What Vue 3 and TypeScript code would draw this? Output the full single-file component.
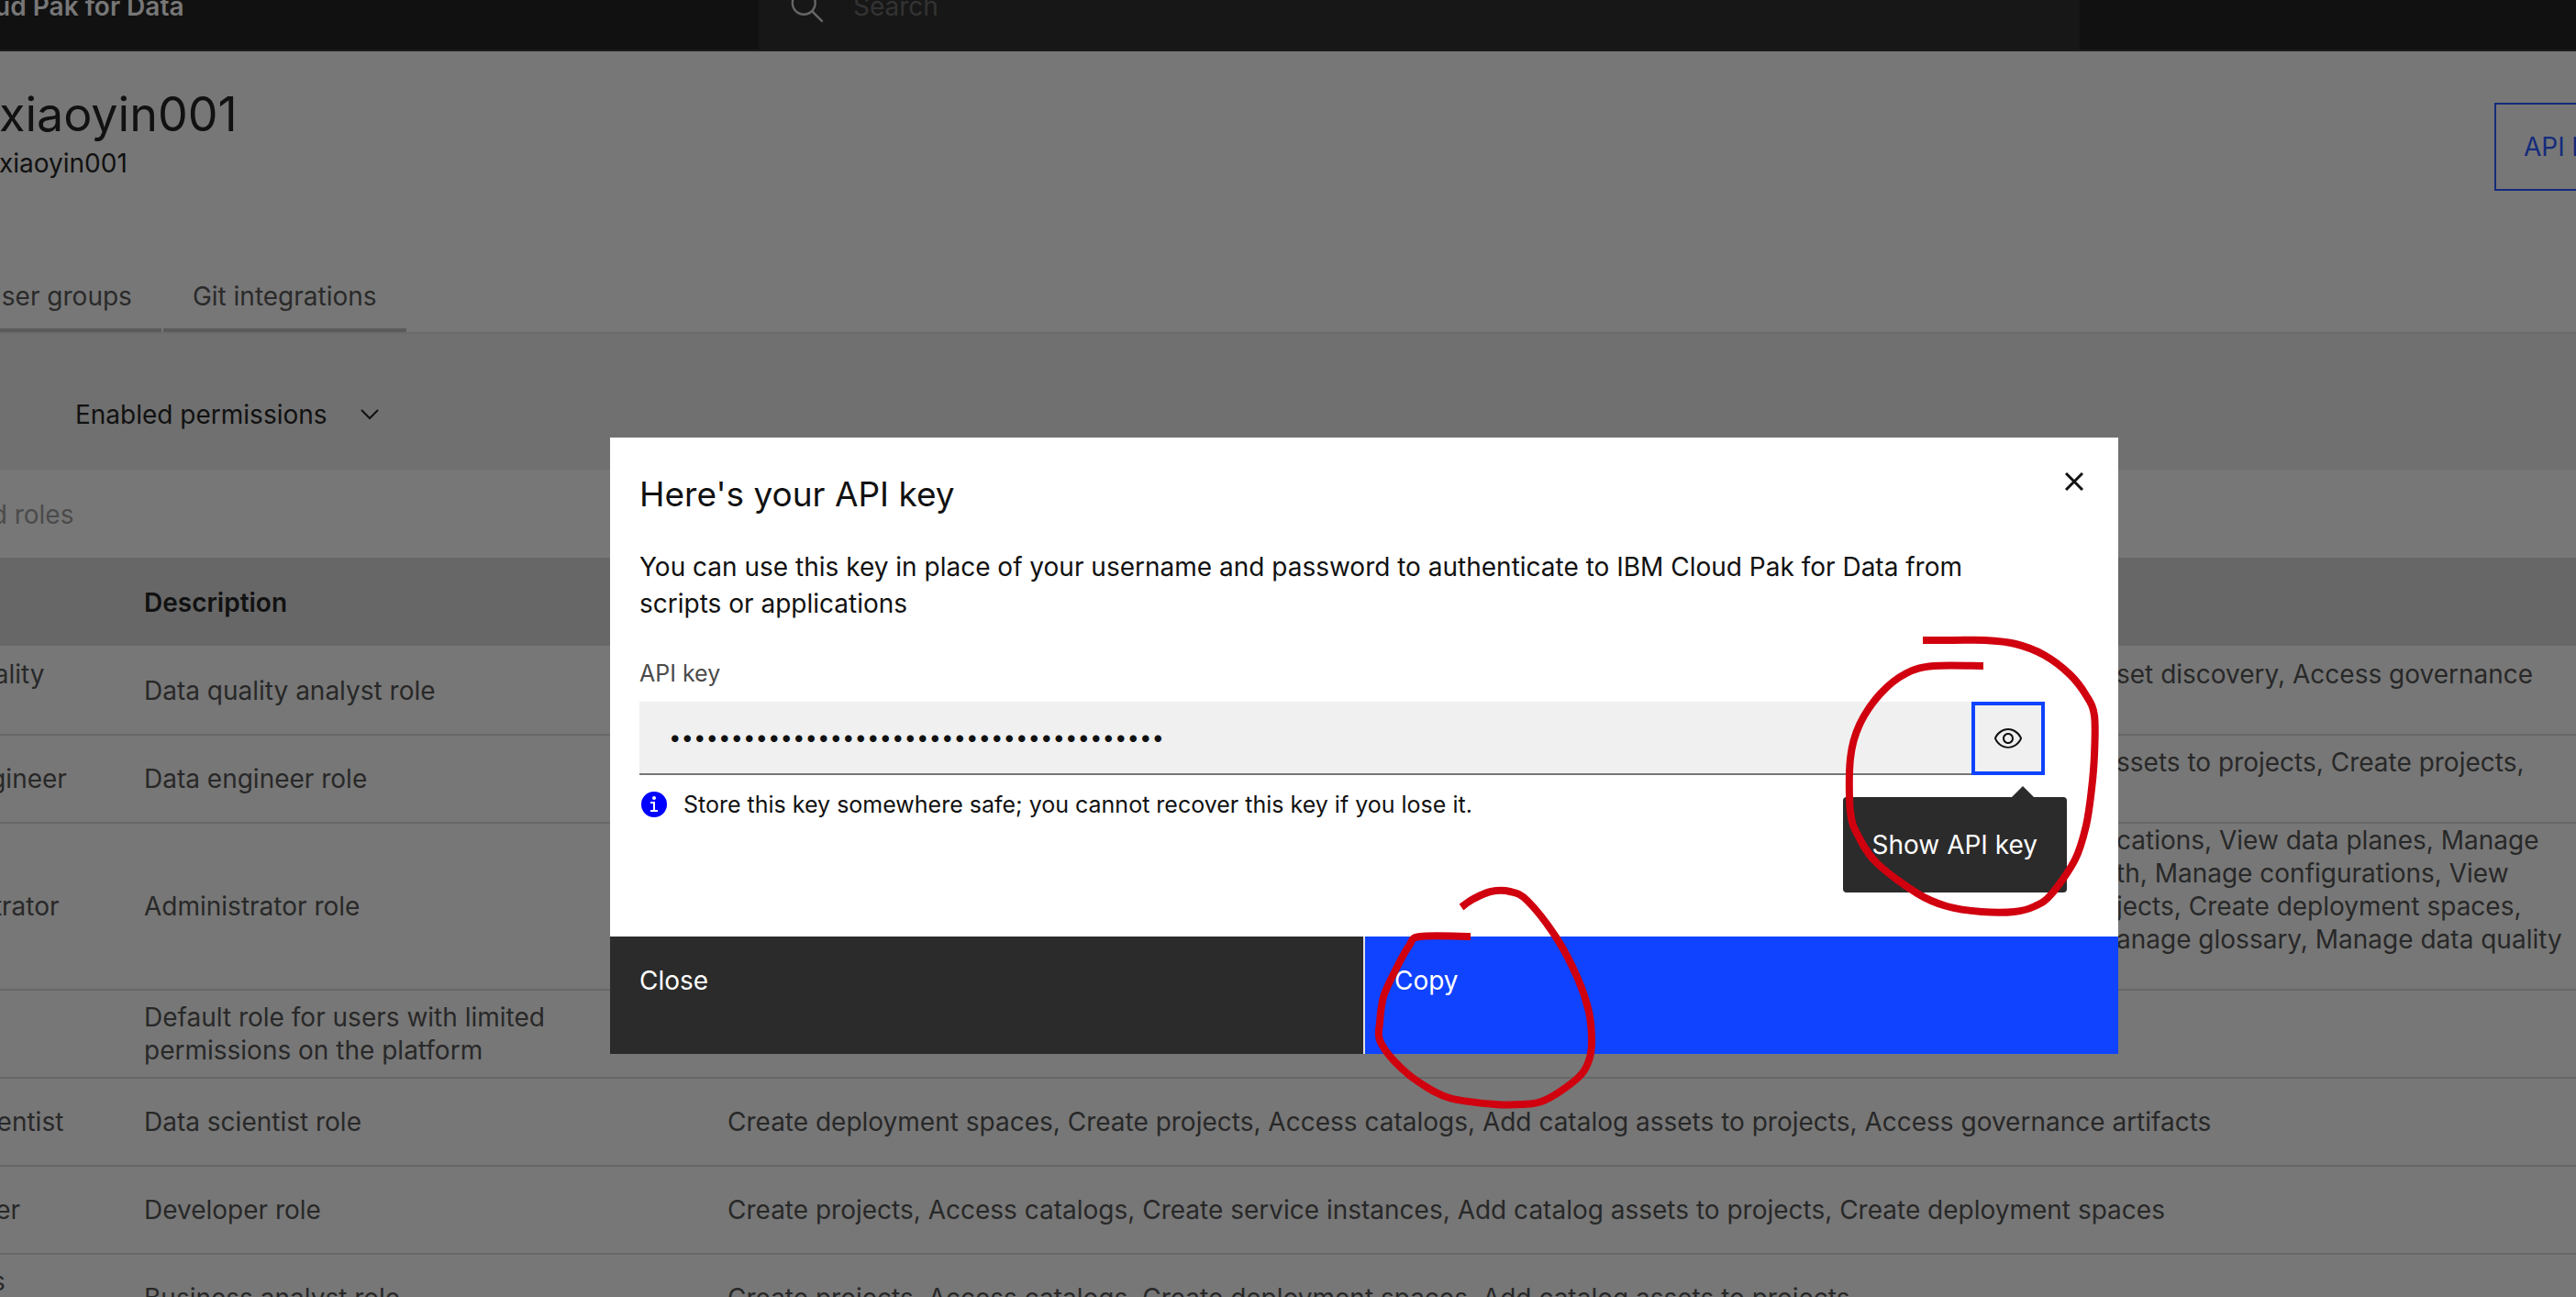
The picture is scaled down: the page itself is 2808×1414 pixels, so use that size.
<script setup lang="ts">
import { ref } from 'vue'

interface Role {
  name: string
  description: string
  permissions: string[]
  trailing?: boolean
}

type Point = [number, number]

const roles: Role[] = [
  {
    name: 'Data Quality Analyst',
    description: 'Data quality analyst role',
    permissions: ['set discovery, Access governance', ''],
    trailing: true,
  },
  {
    name: 'Data Engineer',
    description: 'Data engineer role',
    permissions: ['ssets to projects, Create projects,', ''],
    trailing: true,
  },
  {
    name: 'Administrator',
    description: 'Administrator role',
    permissions: [
      'cations, View data planes, Manage',
      'th, Manage configurations, View',
      'jects, Create deployment spaces,',
      'anage glossary, Manage data quality',
      '',
    ],
    trailing: true,
  },
  {
    name: 'User',
    description: 'Default role for users with limited permissions on the platform',
    permissions: [],
  },
  {
    name: 'Data Scientist',
    description: 'Data scientist role',
    permissions: [
      'Create deployment spaces, Create projects, Access catalogs, Add catalog assets to projects, Access governance artifacts',
    ],
  },
  {
    name: 'Developer',
    description: 'Developer role',
    permissions: [
      'Create projects, Access catalogs, Create service instances, Add catalog assets to projects, Create deployment spaces',
    ],
  },
  {
    name: 'Business Analyst',
    description: 'Business analyst role',
    permissions: ['Create projects, Access catalogs, Create deployment spaces, Add catalog assets to projects'],
  },
]

const apiKey = ref('x'.repeat(40))

const eyeMark: Point[] = [
  [2096, 698], [2130, 698], [2163, 698], [2197, 702], [2228, 714], [2256, 735], [2274, 758], [2283, 780],
  [2283, 823], [2280, 860], [2274, 900], [2262, 937], [2236, 975], [2218, 988], [2196, 994], [2160, 994],
  [2122, 988], [2090, 974], [2046, 941], [2026, 912], [2017, 885], [2017, 827], [2027, 790], [2050, 756],
  [2078, 734], [2108, 726], [2162, 726],
]

const copyMark: Point[] = [
  [1593, 989], [1606, 980], [1625, 972], [1646, 972], [1665, 982], [1697, 1023], [1720, 1067], [1732, 1103],
  [1735, 1132], [1733, 1153], [1724, 1171], [1702, 1189], [1680, 1201], [1660, 1204], [1630, 1204], [1580, 1197],
  [1547, 1180], [1520, 1157], [1504, 1134], [1504, 1115], [1508, 1087], [1520, 1060], [1536, 1031], [1548, 1021],
  [1603, 1021],
]

// Catmull-Rom spline through the given points.
function smooth(points: Point[]): string {
  let d = `M${points[0][0]} ${points[0][1]}`
  for (let i = 0; i < points.length - 1; i++) {
    const a = points[Math.max(i - 1, 0)]
    const b = points[i]
    const c = points[i + 1]
    const e = points[Math.min(i + 2, points.length - 1)]
    d += `C${b[0] + (c[0] - a[0]) / 6} ${b[1] + (c[1] - a[1]) / 6} ${c[0] - (e[0] - b[0]) / 6} ${c[1] - (e[1] - b[1]) / 6} ${c[0]} ${c[1]}`
  }
  return d
}
</script>

<template>
  <div class="app">
    <header class="topbar">
      <div class="brand"><strong>IBM Cloud Pak for Data</strong></div>
      <label class="global-search">
        <svg width="40" height="40" viewBox="0 0 16 16" aria-hidden="true">
          <path fill="currentColor" d="M15 14.3L10.7 10c1.9-2.3 1.6-5.8-.7-7.7S4.2.7 2.3 3 .7 8.8 3 10.7c2 1.7 5 1.7 7 0l4.3 4.3.7-.7zM2 6.5C2 4 4 2 6.5 2S11 4 11 6.5 9 11 6.5 11 2 9 2 6.5z" />
        </svg>
        <input type="search" placeholder="Search" aria-label="Search" />
      </label>
    </header>

    <main class="page">
      <div class="page-head">
        <div>
          <h1>xiaoyin001</h1>
          <p>xiaoyin001</p>
        </div>
        <button type="button" class="api-button">API key</button>
      </div>

      <nav class="tabs">
        <button type="button">User groups</button>
        <button type="button">Git integrations</button>
      </nav>

      <div class="filter">
        <select aria-label="Permissions filter">
          <option>Enabled permissions</option>
        </select>
        <svg width="20" height="12" viewBox="0 0 20 12" aria-hidden="true">
          <path d="M1 1l9 9 9-9" fill="none" stroke="currentColor" stroke-width="2" />
        </svg>
      </div>

      <div class="toolbar">
        <input type="text" placeholder="Assigned roles" aria-label="Assigned roles" />
      </div>

      <table>
        <thead>
          <tr>
            <th class="col-name">Name</th>
            <th class="col-description">Description</th>
            <th></th>
          </tr>
        </thead>
        <tbody>
          <tr v-for="role in roles" :key="role.name">
            <td class="name">{{ role.name }}</td>
            <td>{{ role.description }}</td>
            <td :class="{ trailing: role.trailing }">
              <div v-for="(line, i) in role.permissions" :key="i" class="line">{{ line }}</div>
            </td>
          </tr>
        </tbody>
      </table>
    </main>

    <div class="overlay">
      <section class="modal" role="dialog" aria-labelledby="modal-title">
        <div class="modal-body">
          <div class="modal-head">
            <h2 id="modal-title">Here's your API key</h2>
            <button type="button" class="icon-button" aria-label="Close dialog">
              <svg width="20" height="20" viewBox="0 0 20 20" aria-hidden="true">
                <path d="M1 1l18 18M19 1L1 19" stroke="currentColor" stroke-width="3" />
              </svg>
            </button>
          </div>
          <p class="intro">
            You can use this key in place of your username and password to authenticate to IBM Cloud Pak for Data from
            scripts or applications
          </p>
          <label for="api-key">API key</label>
          <div class="field">
            <input id="api-key" v-model="apiKey" type="password" readonly />
            <button type="button" class="reveal" aria-label="Show API key">
              <svg width="32" height="32" viewBox="0 0 16 16" aria-hidden="true">
                <path fill="currentColor" d="M15.5 7.8C14.3 4.7 11.3 2.6 8 2.5 4.7 2.6 1.7 4.7.5 7.8c0 .1 0 .2 0 .3 1.2 3.1 4.1 5.2 7.5 5.3 3.3-.1 6.3-2.2 7.5-5.3 0-.1 0-.2 0-.3zM8 12.5c-2.7 0-5.4-2-6.5-4.5 1.1-2.5 3.8-4.5 6.5-4.5s5.4 2 6.5 4.5c-1.1 2.5-3.8 4.5-6.5 4.5z" />
                <path fill="currentColor" d="M8 5C6.3 5 5 6.3 5 8s1.3 3 3 3 3-1.3 3-3-1.3-3-3-3zm0 5c-1.1 0-2-.9-2-2s.9-2 2-2 2 .9 2 2-.9 2-2 2z" />
              </svg>
            </button>
            <div class="tooltip" role="tooltip">Show API key</div>
          </div>
          <p class="hint">
            <svg width="28" height="28" viewBox="0 0 28 28" aria-hidden="true">
              <circle cx="14" cy="14" r="14" fill="#0000ff" />
              <circle cx="14" cy="7" r="2" fill="#fff" />
              <path d="M10 11h5v9h3v2h-8v-2h3v-7h-3z" fill="#fff" />
            </svg>
            Store this key somewhere safe; you cannot recover this key if you lose it.
          </p>
        </div>
        <footer>
          <button type="button" class="secondary">Close</button>
          <button type="button" class="primary">Copy</button>
        </footer>
        <svg class="marks" viewBox="665 477 1644 672" aria-hidden="true">
          <path :d="smooth(eyeMark)" />
          <path :d="smooth(copyMark)" />
        </svg>
      </section>
    </div>
  </div>
</template>

<style>
body {
  margin: 0;
  background: #777777;
}
</style>

<style scoped>
.app {
  position: relative;
  height: 100vh;
  overflow: hidden;
  background: #777777;
  color: #111111;
  font: 28px/36px Inter, 'Liberation Sans', sans-serif;
}
.app * {
  box-sizing: border-box;
}
button,
input,
select {
  margin: 0;
  padding: 0;
  border: 0;
  border-radius: 0;
  outline: 0;
  background: none;
  color: inherit;
  font: inherit;
  appearance: none;
}
h1,
h2,
p {
  margin: 0;
  font-weight: 400;
}

.topbar {
  display: flex;
  height: 96px;
  margin-top: -40px;
  border-bottom: 2px solid #1c1c1c;
  background: #111111;
  color: #777777;
}
.brand {
  display: flex;
  flex: 0 0 827px;
  align-items: center;
  white-space: nowrap;
}
.brand strong {
  margin-left: -110px;
  font-weight: 600;
}
.global-search {
  display: flex;
  flex: 1;
  align-items: center;
  gap: 30px;
  margin-right: 541px;
  padding-left: 33px;
  background: #171717;
  color: #666666;
}
.global-search input {
  flex: 1;
}
.global-search input::placeholder {
  color: #333333;
  opacity: 1;
}

.page {
  margin-left: -140px;
}
.page-head {
  display: flex;
  justify-content: space-between;
  height: 232px;
  padding: 34px 0 0 139px;
}
.page-head h1 {
  font-size: 52px;
  line-height: 70px;
}
.page-head p {
  line-height: 36px;
}
.api-button {
  width: 200px;
  height: 96px;
  margin: 22px -111px 0 0;
  padding-left: 30px;
  border: 2px solid #142b7c;
  color: #142b7c;
  text-align: left;
}
.tabs {
  display: flex;
  gap: 2px;
  height: 76px;
  padding-left: 89px;
  border-bottom: 2px solid #6b6b6b;
}
.tabs button {
  height: 74px;
  padding: 0 32px;
  border-bottom: 4px solid #5a5a5a;
  color: #2a2a2a;
}
.filter {
  display: flex;
  align-items: center;
  gap: 36px;
  height: 148px;
  padding: 28px 0 0 222px;
  background: #707070;
}
.filter select {
  height: 48px;
}
.filter svg {
  flex: none;
}
.toolbar {
  display: flex;
  align-items: center;
  height: 96px;
  padding: 2px 0 0 25px;
}
.toolbar input::placeholder {
  color: #4b4b4b;
  opacity: 1;
}

table {
  width: 100%;
  border-spacing: 0;
  table-layout: fixed;
}
th {
  height: 96px;
  padding: 2px 32px 0;
  background: #676767;
  font-weight: 600;
  text-align: left;
}
.col-name {
  width: 265px;
}
.col-description {
  width: 636px;
}
td {
  height: 96px;
  padding: 0 32px;
  border-top: 2px solid #676767;
  color: #282828;
  vertical-align: middle;
}
tbody tr:first-child td {
  border-top-color: transparent;
}
td.name {
  padding-left: 27px;
}
td.trailing {
  padding-left: 1546px;
  padding-right: 0;
}
.line {
  min-height: 36px;
  white-space: nowrap;
}

.overlay {
  position: absolute;
  inset: 0;
  display: flex;
  align-items: flex-start;
  padding: 477px 499px 0 665px;
}
.modal {
  position: relative;
  flex: 1;
  background: #ffffff;
}
.modal-body {
  padding: 36px 80px 128px 32px;
}
.modal-head {
  display: flex;
  justify-content: space-between;
  height: 52px;
}
.modal-head h2 {
  font-size: 37px;
  line-height: 52px;
}
.icon-button {
  width: 28px;
  height: 24px;
  margin-right: -46px;
  line-height: 0;
}
.intro {
  max-width: 1500px;
  margin-top: 33px;
  line-height: 40px;
}
label[for] {
  display: block;
  margin: 40px 0 15px;
  color: #4b4b4b;
  font-size: 25px;
  line-height: 32px;
}
.field {
  position: relative;
  display: flex;
  height: 80px;
}
.field input {
  flex: 1;
  padding: 0 32px;
  border-bottom: 2px solid #767676;
  background: #f0f0f0;
  font-size: 24px;
}
.reveal {
  display: grid;
  width: 80px;
  place-items: center;
  border: 4px solid #0f43ff;
  background: #f0f0f0;
}
.tooltip {
  position: absolute;
  top: 104px;
  right: -24px;
  padding: 34px 32px;
  border-radius: 4px;
  background: #2b2b2b;
  color: #ffffff;
}
.tooltip::before {
  position: absolute;
  right: 36px;
  bottom: 100%;
  border: 12px solid transparent;
  border-top-width: 0;
  border-bottom-color: #2b2b2b;
  content: '';
}
.hint {
  display: flex;
  align-items: center;
  gap: 18px;
  margin-top: 16px;
  padding-left: 2px;
  font-size: 25px;
  line-height: 32px;
}
footer {
  display: flex;
  gap: 2px;
  background: #e0e0e0;
}
footer button {
  flex: 1;
  height: 128px;
  padding: 30px 32px 62px;
  color: #ffffff;
  text-align: left;
}
.secondary {
  background: #2b2b2b;
}
.primary {
  background: #0f43ff;
}
.marks {
  position: absolute;
  inset: 0;
  width: 100%;
  height: 100%;
  overflow: visible;
  pointer-events: none;
}
.marks path {
  fill: none;
  stroke: #d0000f;
  stroke-width: 8px;
}
</style>
